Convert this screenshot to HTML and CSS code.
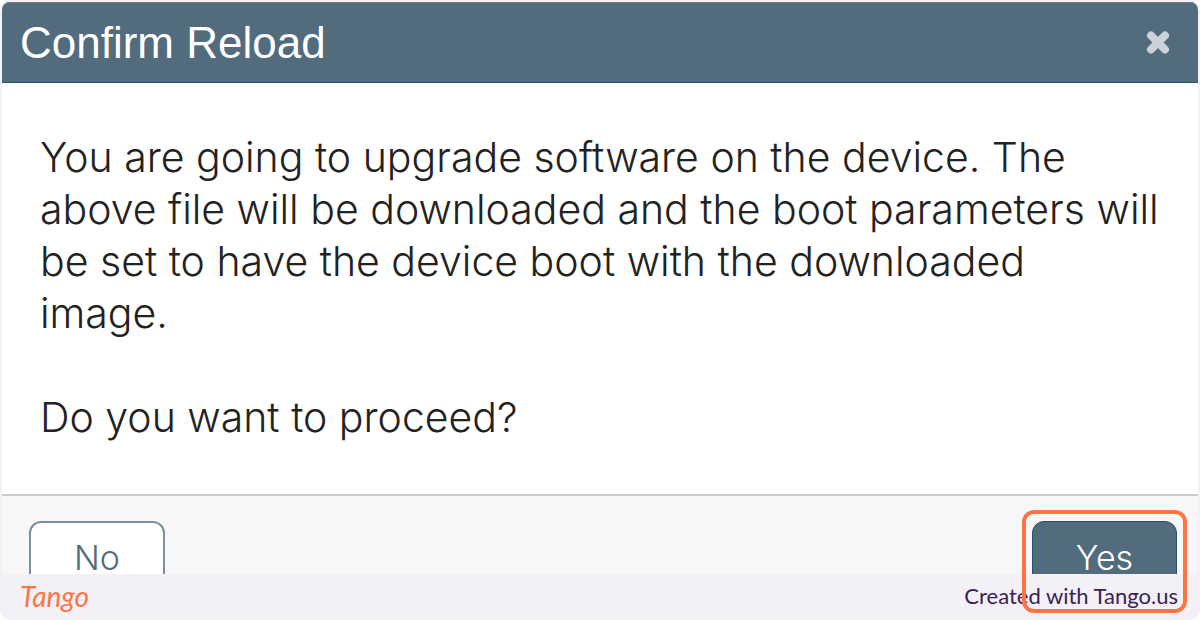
FILE: index.html
```html
<!DOCTYPE html>
<html lang="en">
<head>
<meta charset="utf-8">
<title>Confirm Reload</title>
<link rel="stylesheet" href="styles.css">
</head>
<body>
<div class="frame">
  <section class="dialog" role="dialog" aria-labelledby="dialog-title">
    <header class="dialog-header">
      <h1 class="dialog-title" id="dialog-title">Confirm Reload</h1>
      <button class="close" type="button" aria-label="Close">
        <svg width="24" height="24" viewBox="0 0 24 24" aria-hidden="true"><path d="M5 4.5 19 18.5M19 4.5 5 18.5"/></svg>
      </button>
    </header>
    <div class="dialog-body">
      <p>You are going to upgrade software on the device. The above file will be downloaded and the boot parameters will be set to have the device boot with the downloaded<br>image.</p>
      <p>Do you want to proceed?</p>
    </div>
    <div class="dialog-actions">
      <button class="button button-no" type="button">No</button>
      <button class="button button-yes" type="button">Yes</button>
    </div>
  </section>
  <footer class="credit">
    <span class="brand">Tango</span>
    <span class="credit-text">Created with Tango.us</span>
  </footer>
  <div class="highlight"></div>
</div>
</body>
</html>
```
FILE: styles.css
```css
* { box-sizing: border-box; }

body {
  margin: 0;
  background: #fff;
  font-family: Inter, "Liberation Sans", sans-serif;
}

.frame {
  position: relative;
  display: flex;
  flex-direction: column;
  height: 100vh;
  padding: 2px 2px 0;
  background: #f3f1f7;
  border-radius: 10px;
  overflow: hidden;
}

.dialog {
  flex: 1;
  display: flex;
  flex-direction: column;
  min-height: 0;
  background: #fff;
  border-radius: 8px 8px 0 0;
  overflow: hidden;
}

.dialog-header {
  flex: none;
  display: flex;
  align-items: center;
  justify-content: space-between;
  padding: 12px 28px 12px 18px;
  background: #526c7e;
  border-top: 1px solid #7b7c80;
  border-bottom: 1px solid #24506d;
}

.dialog-title {
  margin: 0;
  color: #fff;
  font-family: "Liberation Sans", Arial, sans-serif;
  font-size: 44px;
  font-weight: 400;
  line-height: 55px;
}

.close {
  display: flex;
  padding: 0;
  border: 0;
  background: none;
}

.close path {
  fill: none;
  stroke: #cbd3d9;
  stroke-width: 8;
  stroke-linecap: round;
}

.dialog-body {
  flex: none;
  padding: 48px 32px 51px 38px;
  color: #222;
  font-size: 41px;
  font-weight: 300;
  line-height: 52px;
}

.dialog-body p { margin: 0; }
.dialog-body p + p { margin-top: 52px; }

.dialog-actions {
  flex: 1 0 auto;
  display: flex;
  align-items: flex-start;
  justify-content: space-between;
  padding: 25px 21px 25px 27px;
  background: #f7f7f7;
  border-top: 2px solid #cbcbcb;
}

.button {
  height: 74px;
  border-radius: 12px;
  font-family: inherit;
  font-size: 34px;
  font-weight: 300;
  line-height: 42px;
}

.button-no {
  width: 136px;
  border: 2px solid #7c8f9d;
  background: #fff;
  color: #526c7e;
}

.button-yes {
  width: 145px;
  border: 1px solid #24506d;
  background: #526c7e;
  color: #fff;
}

.credit {
  flex: none;
  display: flex;
  align-items: center;
  justify-content: space-between;
  height: 46px;
  padding: 0 20px 3px 18px;
}

.brand {
  color: #ff7442;
  font-family: Lato, sans-serif;
  font-size: 28px;
  font-style: italic;
  font-weight: 400;
}

.credit-text {
  color: #3b2152;
  font-family: Lato, sans-serif;
  font-size: 22px;
}

.highlight {
  position: absolute;
  right: 13px;
  bottom: 7px;
  width: 165px;
  height: 103px;
  border: 4px solid #ff7442;
  border-radius: 12px;
  pointer-events: none;
}
```
